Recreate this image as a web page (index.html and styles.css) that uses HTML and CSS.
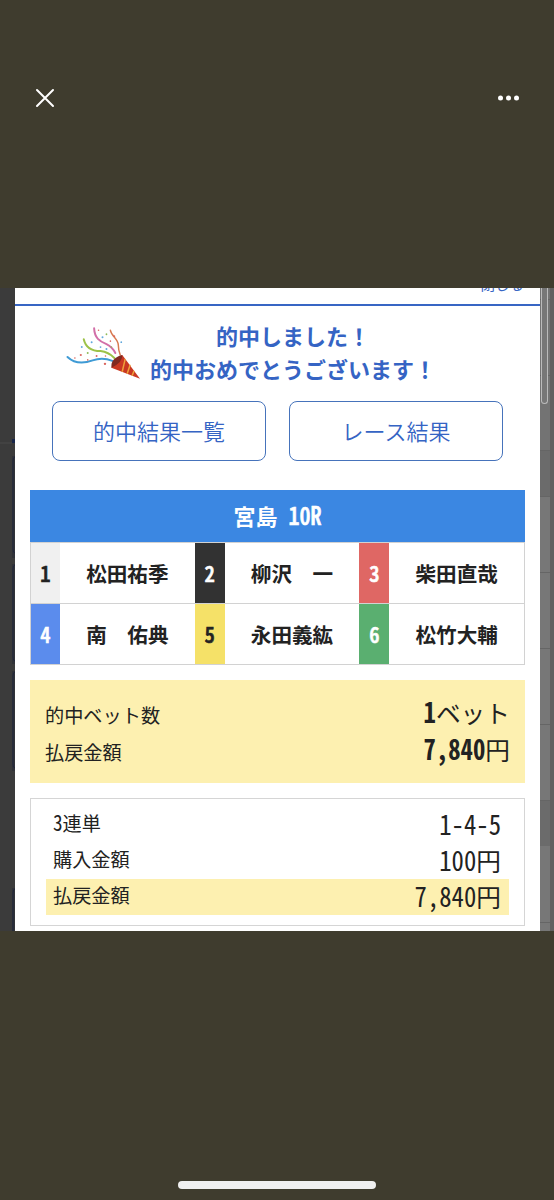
FILE: index.html
```
<!DOCTYPE html>
<html lang="ja">
<head>
<meta charset="utf-8">
<title>的中結果</title>
<link rel="stylesheet" href="styles.css">
</head>
<body>
<div class="viewer">
  <header class="topbar">
    <svg class="close" viewBox="0 0 20 20"><path d="M2 2L18 18M18 2L2 18"/></svg>
    <svg class="more" viewBox="0 0 24 6"><circle cx="3.5" cy="3" r="2.5"/><circle cx="11.5" cy="3" r="2.5"/><circle cx="19.5" cy="3" r="2.5"/></svg>
  </header>
  <main class="photo">
    <aside class="left"><svg viewBox="0 0 15 643"><path class="shade" d="M12 168h3v102h-3zM12 276h3v100h-3zM12 383h3v100h-3zM12 600h3v43h-3z"/><path class="edge" d="M15 169q-2 0-2 4v88q0 4 2 4M15 277q-2 0-2 4v88q0 4 2 4M15 384q-2 0-2 4v88q0 4 2 4M15 601q-2 0-2 4v38"/><path class="rule" d="M0 155h12"/><path class="mark" d="M12 151h3v4h-3z"/></svg></aside>
    <section class="modal">
      <div class="modal-head"><span>閉じる</span></div>
      <div class="content">
        <div class="congrats">
          <svg class="popper" viewBox="0 0 76 54">
            <path class="s blue" d="M1.500 31C10 39 20 37 27 34.500Q37 31 47 35"/>
            <path class="s green" d="M18 13C20 22 27 25 35 25Q43 26 49 32"/>
            <path class="s pink" d="M28.500 2C29 12 34 15 41 18Q47 21 50 27"/>
            <path class="s orange" d="M45 4C46 10 53 13 53 19Q53 24 55 29"/>
            <g class="r"><circle cx="15" cy="29" r="1.100"/><circle cx="9" cy="32" r=".8"/><circle cx="22" cy="34" r=".8"/><circle cx="31" cy="30" r="1"/><circle cx="40" cy="30" r=".8"/><circle cx="39.500" cy="38" r="1.200"/><circle cx="49" cy="10" r=".9"/><circle cx="33" cy="4" r=".8"/><circle cx="45" cy="15" r=".8"/></g>
            <g class="b"><circle cx="16" cy="21" r="1"/><circle cx="26" cy="16" r="1"/><circle cx="37" cy="11" r="1"/><circle cx="41" cy="23" r="1"/><circle cx="56" cy="16" r=".9"/><circle cx="35" cy="21" r=".9"/></g>
            <g class="g"><circle cx="22" cy="27" r="1"/><circle cx="41" cy="8" r=".9"/><circle cx="46" cy="21" r=".8"/></g>
            <path class="cone" d="M57 29L75 53L46 42Q48 34 57 29Z"/>
            <path class="mouth" d="M57 29Q58 36 46 42Q45 32 57 29Z"/>
            <path class="stripe" d="M60 33L57 46M65 39L62 48M69 45L67 50"/>
          </svg>
          <h1>的中しました！<br>的中おめでとうございます！</h1>
        </div>
        <div class="buttons"><button>的中結果一覧</button><button>レース結果</button></div>
        <h2>宮島<i class="gap"> </i><i class="num">10R</i></h2>
        <div class="racers">
          <b class="n1"><i class="num">1</i></b><span>松田祐季</span><b class="n2"><i class="num">2</i></b><span>柳沢　一</span><b class="n3"><i class="num">3</i></b><span>柴田直哉</span>
          <b class="n4"><i class="num">4</i></b><span>南　佑典</span><b class="n5"><i class="num">5</i></b><span>永田義紘</span><b class="n6"><i class="num">6</i></b><span>松竹大輔</span>
        </div>
        <div class="summary">
          <div class="row"><span>的中ベット数</span><em><b class="num">1</b>ベット</em></div>
          <div class="row"><span>払戻金額</span><em><b class="num">7,840</b>円</em></div>
        </div>
        <div class="detail">
          <div class="row"><span><i class="num">3</i>連単</span><em><i class="num">1-4-5</i></em></div>
          <div class="row"><span>購入金額</span><em><i class="num">100</i>円</em></div>
          <div class="row paid"><span>払戻金額</span><em><i class="num">7,840</i>円</em></div>
        </div>
      </div>
    </section>
    <aside class="right"><div class="thumb"></div></aside>
  </main>
  <footer><div class="home"></div></footer>
</div>
</body>
</html>
```
FILE: styles.css
```
* { box-sizing: border-box; }
body { margin: 0; background: #3f3c2e; font-family: "Noto Sans CJK JP", sans-serif; color: #222; }
.viewer { width: 554px; height: 1200px; display: flex; flex-direction: column; overflow: hidden; }
.topbar { height: 287.5px; padding: 88px 33px 0 35px; display: flex; justify-content: space-between; }
.close { width: 20px; height: 20px; fill: none; stroke: #fff; stroke-width: 2; stroke-linecap: round; }
.more { width: 24px; height: 6px; margin-top: 7px; fill: #fff; }
.photo { height: 643px; display: flex; overflow: hidden; }
.left { width: 15px; background: #3b3b3b; }
.left svg { display: block; width: 15px; height: 643px; }
.shade { fill: #303238; }
.edge { fill: none; stroke: #20263c; stroke-width: 1; }
.rule { stroke: #4b4b4b; }
.mark { fill: #18264a; }
.right { width: 14px; padding-left: 1px; border-right: 4px solid #606060; background: linear-gradient(#737373 0 11px, #656565 11px 12px, #737373 12px 87px, #656565 87px 88px, #737373 88px 162px, #656565 162px 163px, #6b6b6b 163px 208px, #656565 208px 209px, #777 209px 284px, #656565 284px 285px, #777 285px 360px, #656565 360px 361px, #777 361px 436px, #656565 436px 437px, #777 437px 512px, #656565 512px 513px, #6b6b6b 513px 558px, #777 558px 634px, #656565 634px 635px, #777 635px); }
.thumb { width: 7px; height: 116px; border: 1px solid #bbb; border-top: 0; border-radius: 0 0 4px 4px; background: #777; }
.modal { width: 525px; background: #fff; overflow: hidden; }
.modal-head { height: 18.500px; border-bottom: 2px solid #3866c4; display: flex; justify-content: flex-end; align-items: flex-start; padding-right: 16px; color: #3866c4; font-size: 14.500px; line-height: 20px; }
.modal-head span { margin-top: -14px; }
.content { padding: 13px 15px 0; }
.congrats { height: 67px; display: flex; padding-left: 36px; }
.popper { width: 75px; height: 54px; margin-top: 7px; }
.s { fill: none; stroke-width: 2; stroke-linecap: round; }
.blue { stroke: #3f9bd5; } .green { stroke: #9dc248; } .pink { stroke: #d26fa8; } .orange { stroke: #d87b51; stroke-width: 1.500; }
.r { fill: #db665f; } .b { fill: #62a8dc; } .g { fill: #8fba58; }
.cone { fill: #c93822; } .mouth { fill: #812a20; } .stripe { fill: none; stroke: #efa23b; stroke-width: 1.500; }
h1 { margin: 0 0 0 9px; font-size: 22px; line-height: 33px; font-weight: 700; text-align: center; color: #3564c4; white-space: nowrap; }
.num { display: inline-block; line-height: 1.1; font-style: normal; font-feature-settings: "hwid"; transform: scaleY(1.14); transform-origin: 50% 82%; }
.gap { font-feature-settings: "hwid"; white-space: pre; }
.buttons { display: flex; gap: 23px; padding: 15px 22px 0; }
button { width: 214px; height: 60px; padding: 0 0 3px; border: 1px solid #4673bb; border-radius: 8px; background: #fff; color: #3564c4; font: 350 22px "Noto Sans CJK JP", sans-serif; }
h2 { margin: 29px 0 0; height: 52px; background: #3b87e2; color: #fff; font-size: 22px; line-height: 50px; text-align: center; font-weight: 700; }
h2 .num { font-weight: 500; -webkit-text-stroke: .6px; }
.racers { display: grid; grid-template-columns: 29px 1fr 30px 1fr 30px 1fr; grid-template-rows: 60px 60px; row-gap: 1px; height: 123px; border: 1px solid #d2d2d2; background: #d2d2d2; font-size: 20.600px; font-weight: 700; line-height: 60px; text-align: center; }
.racers span { background: #fff; }
.racers b { color: #fff; }
.racers .num { font-weight: 500; -webkit-text-stroke: .6px; transform: scaleY(1.07); }
.racers .n1 { background: #f0f0f0; color: #222; } .n2 { background: #323232; } .n3 { background: #df6764; }
.n4 { background: #5b8ced; } .racers .n5 { background: #f5e168; color: #222; } .n6 { background: #5aaf70; }
.summary { height: 103px; margin-top: 15px; padding: 14px 15px 0; background: #fdf0b0; }
.row { display: flex; align-items: center; justify-content: space-between; height: 37px; font-size: 19.200px; line-height: 36px; }
.summary span { padding-top: 5px; }
.summary em { padding-bottom: 1px; }
em { font-style: normal; font-size: 24.700px; }
em .num { line-height: 1; }
.detail { height: 128px; margin-top: 15px; padding: 8px 15px 0; border: 1px solid #d5d5d5; }
.detail .row { height: 36px; padding: 0 8px 2px 7px; }
.detail .row > span { padding-bottom: 2px; }
.detail .paid { background: #fdf0b0; }
footer { flex: 1; display: flex; justify-content: center; align-items: flex-end; padding-bottom: 11px; }
.home { width: 198px; height: 8px; border-radius: 4px; background: #f0f0f0; }
```
